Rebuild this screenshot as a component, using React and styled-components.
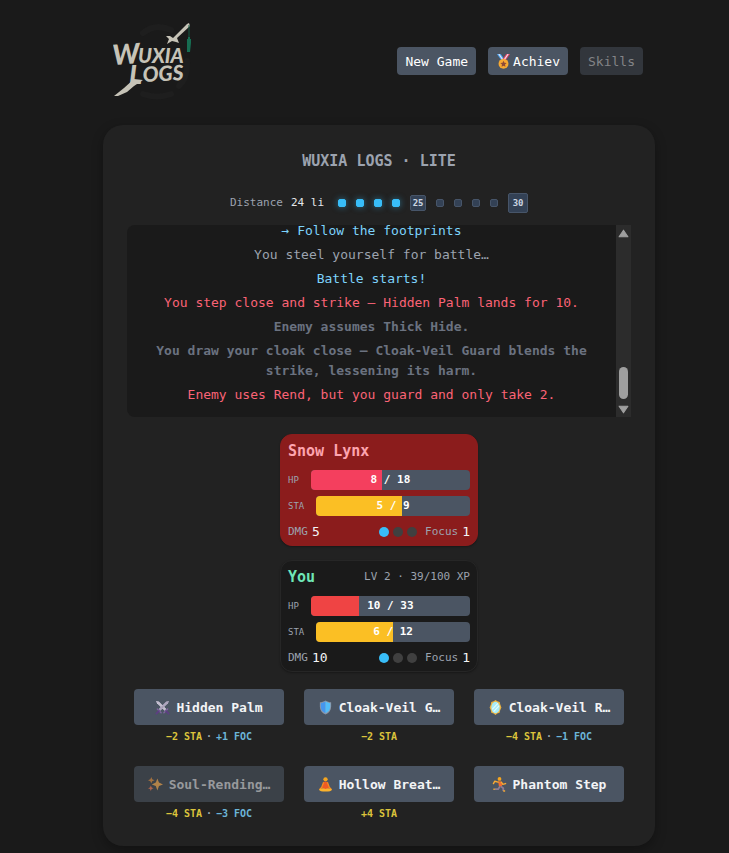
import React from "react";
import styled, { createGlobalStyle } from "styled-components";

const GlobalStyle = createGlobalStyle`
  * {
    box-sizing: border-box;
  }

  body {
    margin: 0;
    background: #1a1a1a;
    color: #e5e7eb;
    font-family: "DejaVu Sans Mono", "Liberation Mono", monospace;
    font-size: 13px;
    line-height: 20px;
  }

  button {
    font-family: inherit;
  }
`;

const logs = [
  { text: "→ Follow the footprints", tone: "event" },
  { text: "You steel yourself for battle…", tone: "plain" },
  { text: "Battle starts!", tone: "event" },
  { text: "You step close and strike — Hidden Palm lands for 10.", tone: "damage" },
  { text: "Enemy assumes Thick Hide.", tone: "dim" },
  {
    text: "You draw your cloak close — Cloak-Veil Guard blends the strike, lessening its harm.",
    tone: "dim",
  },
  { text: "Enemy uses Rend, but you guard and only take 2.", tone: "damage" },
];

const tones = {
  event: "#7dd3fc",
  plain: "#9ca3af",
  damage: "#fb6376",
  dim: "#6b7280",
};

const skills = [
  { name: "Hidden Palm", icon: "swords", sta: "−2 STA", foc: "+1 FOC" },
  { name: "Cloak-Veil Guard", icon: "shield", sta: "−2 STA" },
  { name: "Cloak-Veil Reflection", icon: "mirror", sta: "−4 STA", foc: "−1 FOC" },
  { name: "Soul-Rending Palm", icon: "sparkles", sta: "−4 STA", foc: "−3 FOC", disabled: true },
  { name: "Hollow Breathing", icon: "lotus", sta: "+4 STA" },
  { name: "Phantom Step", icon: "runner" },
];

const steps = [
  { on: true },
  { on: true },
  { on: true },
  { on: true },
  { mark: 25 },
  {},
  {},
  {},
  {},
  { mark: 30, last: true },
];

const icons = {
  swords: (
    <>
      <path d="M1 1l3 .7 8 8-1.7 1.7-8.2-8z" fill="#d9d3e3" />
      <path d="M15 1l-3 .7-8 8 1.7 1.7 8.2-8z" fill="#b9b1c9" />
      <path d="M2 1.5l9 9M14 1.5l-9 9" stroke="#8f869f" strokeWidth=".6" />
      <path d="M2.500 9.500l4 4M13.500 9.500l-4 4" stroke="#8064a0" strokeWidth="1.500" strokeLinecap="round" />
      <path d="M4 12l-2.500 2.500M12 12l2.500 2.500" stroke="#5d3f82" strokeWidth="2" strokeLinecap="round" />
    </>
  ),
  shield: (
    <>
      <path d="M8 .5c2 1.300 4 1.800 6 2v4.800c0 3.800-2.400 6.700-6 8.200-3.600-1.500-6-4.400-6-8.200V2.500c2-.2 4-.7 6-2z" fill="#8d98a9" />
      <path d="M8 1.700v12.500c-3-1.500-5-3.800-5-7V3.400c1.800-.2 3.400-.7 5-1.700z" fill="#4596ee" />
      <path d="M8 1.700v12.500c3-1.500 5-3.800 5-7V3.400c-1.800-.2-3.400-.7-5-1.700z" fill="#52bdf8" />
    </>
  ),
  mirror: (
    <>
      <path d="M8 0l2 1.300 2.500.7.500 2.500L14.300 8 13 11l-.7 2.700-2.500.8L8 16l-2-1.500-2.500-.8L3 11 1.700 8 3 4.700 3.500 2 6 1.300z" fill="#edb544" />
      <ellipse cx="8" cy="8" rx="4.500" ry="6.200" fill="#a6edf9" />
      <path d="M4.500 10l6-6.500M6 12.500l6-6.500" stroke="#e6fcff" strokeWidth="1.200" />
    </>
  ),
  sparkles: (
    <>
      <path d="M10 1.500l1.700 4.300L16 8l-4.300 1.700L10 14.500 8.300 9.700 4 8l4.300-2.200z" fill="#f0a54a" />
      <path d="M3.500 0l1 2.500L7 3.500l-2.500 1-1 2.500-1-2.500L0 3.500l2.500-1z" fill="#d98a3c" />
      <path d="M3 9l.9 2.100L6 12l-2.100.9L3 15l-.9-2.100L0 12l2.100-.9z" fill="#ee7850" />
    </>
  ),
  lotus: (
    <>
      <circle cx="8" cy="2.500" r="2.300" fill="#f5a51f" />
      <path d="M6 5h4l2 6.500-2.500 1.200h-3L4 11.500z" fill="#ee5a24" />
      <path d="M6 5.500L4 11l-2.500 2.500M10 5.500l2 5.500 2.500 2.500" fill="none" stroke="#f58a20" strokeWidth="1.400" strokeLinejoin="round" />
      <path d="M1 13.500q3.500-2.500 7-.8 3.500-1.700 7 .8-1 2-7 2t-7-2z" fill="#fbb22c" />
    </>
  ),
  runner: (
    <>
      <circle cx="8" cy="2" r="2" fill="#f5a51f" />
      <path d="M6.500 4.500l3.500.2.800 5-3.300 1z" fill="#f26b31" />
      <path d="M6.500 5.500L3 4.500 1.500 7M10 5.500l1.500 2.300 3-.8" fill="none" stroke="#f9aa32" strokeWidth="1.500" strokeLinecap="round" strokeLinejoin="round" />
      <path d="M9.500 10l2.500 2v3M8.500 10L6.500 13H3" fill="none" stroke="#8d7c94" strokeWidth="1.900" strokeLinejoin="round" />
      <path d="M3 13H1.500M12 15h2" stroke="#f9aa32" strokeWidth="1.500" />
    </>
  ),
  medal: (
    <>
      <path d="M1 0h4l4.500 6-3 2z" fill="#4aa5f0" />
      <path d="M15 0h-4L6.500 6l3 2z" fill="#e94262" />
      <path d="M3 0l4.500 6.500M13 0L8.500 6.500" stroke="#e7e3f2" strokeWidth="1.200" />
      <circle cx="8" cy="10.500" r="5.300" fill="#f7a932" />
      <path d="M8 7.200l1 2.200 2.400.2-1.800 1.600.5 2.400L8 12.400l-2.100 1.200.5-2.400-1.800-1.600L7 9.400z" fill="#8d4b38" />
    </>
  ),
};

function Emoji({ name }) {
  return (
    <EmojiSvg viewBox="0 0 16 16" aria-hidden="true">
      {icons[name]}
    </EmojiSvg>
  );
}

function Logo() {
  return (
    <LogoSvg viewBox="0 0 84 80" role="img" aria-label="Wuxia Logs">
      <path d="M30 12Q42 2 58 9M74 40Q75 56 66 65M30 73Q44 78 58 73" fill="none" stroke="#1e1e1e" strokeWidth="6" strokeLinecap="round" />
      <g fill="#c6c3b7">
        <path d="M74 3l2-1 1 3-13 12 2 5-3-1-4-1-5 3 2-5-3-3 4 0 3 2z" />
        <path d="M21 58l9 1-9 6-7 6-9 4-4 0 10-8z" />
        <g fontFamily="Lato, 'Open Sans', sans-serif" fontWeight="900" fontStyle="italic">
          <text x="0" y="44" fontSize="28" transform="rotate(-4 0 44)">W</text>
          <text x="25" y="42" fontSize="20">UXIA</text>
          <text x="16" y="63" fontSize="27">L</text>
          <text x="30" y="61" fontSize="21" transform="rotate(-3 30 61)">OGS</text>
        </g>
      </g>
      <path d="M76 4v14" stroke="#155943" />
      <path d="M75 16h2v2h1v4l-1 9h-3v-13h1z" fill="#176d52" />
    </LogoSvg>
  );
}

function Meter({ label, value, max, color }) {
  return (
    <MeterRow>
      <MeterLabel>{label}</MeterLabel>
      <Track role="meter" aria-label={label} aria-valuenow={value} aria-valuemin={0} aria-valuemax={max}>
        <Fill $color={color} style={{ width: `${(value / max) * 100}%` }} />
        <TrackText>
          {value} / {max}
        </TrackText>
      </Track>
    </MeterRow>
  );
}

function Fighter({ name, level, enemy, hp, maxHp, sta, maxSta, dmg, focus }) {
  return (
    <Card $enemy={enemy}>
      <CardHead>
        <Name $enemy={enemy}>{name}</Name>
        {level && <Level>{level}</Level>}
      </CardHead>
      <Meters>
        <Meter label="HP" value={hp} max={maxHp} color={enemy ? "#f43f5e" : "#ef4444"} />
        <Meter label="STA" value={sta} max={maxSta} color="#fbbf24" />
      </Meters>
      <Stats>
        <Stat>
          DMG <b>{dmg}</b>
        </Stat>
        <FocusBox>
          <Dots>
            {[1, 2, 3].map((n) => (
              <Dot key={n} $on={n <= focus} />
            ))}
          </Dots>
          <Stat>
            Focus <b>{focus}</b>
          </Stat>
        </FocusBox>
      </Stats>
    </Card>
  );
}

export default function App() {
  return (
    <Page>
      <GlobalStyle />
      <Header>
        <Logo />
        <Nav>
          <NavButton>New Game</NavButton>
          <NavButton>
            <Emoji name="medal" />
            Achiev
          </NavButton>
          <NavButton disabled>Skills</NavButton>
        </Nav>
      </Header>

      <Panel>
        <Title>WUXIA LOGS · LITE</Title>

        <Distance>
          <DistanceText>
            Distance <b>24 li</b>
          </DistanceText>
          <Steps>
            {steps.map((step, index) =>
              step.mark ? (
                <Mark key={index} $last={step.last}>{step.mark}</Mark>
              ) : (
                <Step key={index} $on={step.on} />
              )
            )}
          </Steps>
        </Distance>

        <LogBox>
          <LogList>
            {logs.map((log) => (
              <LogLine key={log.text} $tone={log.tone}>{log.text}</LogLine>
            ))}
          </LogList>
          <Scrollbar>
            <Arrow viewBox="0 0 10 8" aria-hidden="true">
              <path d="M5 1L9 7H1z" />
            </Arrow>
            <Thumb />
            <Arrow viewBox="0 0 10 8" aria-hidden="true">
              <path d="M5 7L1 1h8z" />
            </Arrow>
          </Scrollbar>
        </LogBox>

        <Fighters>
          <Fighter enemy name="Snow Lynx" hp={8} maxHp={18} sta={5} maxSta={9} dmg={5} focus={1} />
          <Fighter name="You" level="LV 2 · 39/100 XP" hp={10} maxHp={33} sta={6} maxSta={12} dmg={10} focus={1} />
        </Fighters>

        <SkillGrid>
          {skills.map((skill) => (
            <div key={skill.name}>
              <SkillButton disabled={skill.disabled}>
                <Emoji name={skill.icon} />
                <SkillName>
                  {skill.name.length > 12 ? `${skill.name.slice(0, 12).trimEnd()}…` : skill.name}
                </SkillName>
              </SkillButton>
              <Cost>
                {skill.sta && <Sta>{skill.sta}</Sta>}
                {skill.foc && <span>·</span>}
                {skill.foc && <Foc>{skill.foc}</Foc>}
              </Cost>
            </div>
          ))}
        </SkillGrid>
      </Panel>
    </Page>
  );
}

const Page = styled.main`
  padding: 19px 74px 7px 103px;
`;

const Header = styled.header`
  display: flex;
  align-items: center;
  justify-content: space-between;
  height: 84px;
  padding: 0 12px 0 10px;
  margin-bottom: 22px;
`;

const LogoSvg = styled.svg`
  width: 84px;
  height: 80px;
`;

const Nav = styled.nav`
  display: flex;
  gap: 12px;
`;

const NavButton = styled.button`
  display: flex;
  align-items: center;
  gap: 2px;
  height: 28px;
  padding: 0 8px;
  border: 0;
  border-radius: 4px;
  background: #4b5563;
  color: #fff;
  font-size: 13px;

  &:disabled {
    background: #32363c;
    color: #838487;
  }
`;

const EmojiSvg = styled.svg`
  flex: none;
  width: 15px;
  height: 15px;
`;

const Panel = styled.section`
  padding: 24px;
  border-radius: 20px;
  background: #222;
  box-shadow: 0 4px 12px rgba(0, 0, 0, 0.3);
`;

const Title = styled.h1`
  margin: 0 0 20px;
  color: #9ca3af;
  font-size: 15px;
  line-height: 24px;
  text-align: center;
`;

const Distance = styled.div`
  display: flex;
  align-items: center;
  justify-content: center;
  gap: 14px;
  height: 20px;
  margin-bottom: 12px;
`;

const DistanceText = styled.div`
  display: flex;
  gap: 8px;
  color: #9ca3af;
  font-size: 11px;

  b {
    color: #e5e7eb;
    font-weight: normal;
  }
`;

const Steps = styled.div`
  display: flex;
  align-items: center;
  gap: 10px;
`;

const Step = styled.span`
  width: 8px;
  height: 8px;
  border: 1px solid ${({ $on }) => ($on ? "#38bdf8" : "#475569")};
  border-radius: 2px;
  background: ${({ $on }) => ($on ? "#38bdf8" : "#334155")};
  box-shadow: ${({ $on }) => ($on ? "0 0 6px rgba(56, 189, 248, 0.5)" : "none")};
`;

const Mark = styled.span`
  display: flex;
  align-items: center;
  justify-content: center;
  width: ${({ $last }) => ($last ? "20px" : "16px")};
  height: ${({ $last }) => ($last ? "20px" : "16px")};
  border: 1px solid #475569;
  border-radius: 2px;
  background: #334155;
  color: #cbd5e1;
  font-size: 9px;
  font-weight: bold;
`;

const LogBox = styled.div`
  display: flex;
  height: 192px;
  overflow: hidden;
  border-radius: 8px 0 0 8px;
  background: #1a1a1a;
`;

const LogList = styled.div`
  flex: 1;
  display: flex;
  flex-direction: column;
  justify-content: flex-end;
  gap: 4px;
  padding: 0 12px 12px;
`;

const LogLine = styled.p`
  margin: 0;
  color: ${({ $tone }) => tones[$tone]};
  font-weight: ${({ $tone }) => ($tone === "dim" ? "bold" : "normal")};
  text-align: center;
`;

const Scrollbar = styled.div`
  display: flex;
  flex-direction: column;
  align-items: center;
  width: 15px;
  padding: 4px 0 3px;
  background: #2c2c2c;
`;

const Arrow = styled.svg`
  width: 11px;
  height: 9px;
  fill: #9f9f9f;
  stroke: #9f9f9f;
  stroke-width: 1;
  stroke-linejoin: round;
`;

const Thumb = styled.span`
  width: 9px;
  height: 32px;
  margin: auto 0 6px;
  border-radius: 5px;
  background: #9f9f9f;
`;

const Fighters = styled.div`
  display: flex;
  flex-direction: column;
  align-items: center;
  gap: 14px;
  margin: 17px 0;
`;

const Card = styled.article`
  width: 198px;
  padding: 4px 7px 3px;
  border: 1px solid ${({ $enemy }) => ($enemy ? "#8b1c1c" : "#262626")};
  border-radius: 12px;
  background: ${({ $enemy }) => ($enemy ? "#8b1c1c" : "#1a1a1a")};
  box-shadow: 0 1px 2px rgba(0, 0, 0, 0.3);
`;

const CardHead = styled.div`
  display: flex;
  align-items: center;
  justify-content: space-between;
  height: 24px;
  margin-bottom: 7px;
`;

const Name = styled.h2`
  margin: 0;
  color: ${({ $enemy }) => ($enemy ? "#fda4af" : "#6ee7b7")};
  font-size: 15px;
`;

const Level = styled.span`
  color: #9ca3af;
  font-size: 11px;
`;

const Meters = styled.div`
  display: grid;
  gap: 6px;
  margin-bottom: 6px;
`;

const MeterRow = styled.div`
  display: flex;
  align-items: center;
  gap: 12px;
`;

const MeterLabel = styled.span`
  color: #9ca3af;
  font-size: 9px;
`;

const Track = styled.div`
  position: relative;
  flex: 1;
  height: 20px;
  overflow: hidden;
  border-radius: 4px;
  background: #4b5563;
`;

const Fill = styled.div`
  height: 100%;
  background: ${({ $color }) => $color};
`;

const TrackText = styled.span`
  position: absolute;
  inset: 0;
  color: #fff;
  font-size: 11px;
  font-weight: bold;
  text-align: center;
`;

const Stats = styled.div`
  display: flex;
  align-items: center;
  justify-content: space-between;
`;

const FocusBox = styled.div`
  display: flex;
  align-items: center;
  gap: 8px;
`;

const Stat = styled.span`
  display: flex;
  gap: 4px;
  color: #9ca3af;
  font-size: 11px;

  b {
    color: #f3f4f6;
    font-size: 13px;
    font-weight: normal;
  }
`;

const Dots = styled.span`
  display: flex;
  gap: 4px;
`;

const Dot = styled.span`
  width: 10px;
  height: 10px;
  border-radius: 50%;
  background: ${({ $on }) => ($on ? "#38bdf8" : "#404040")};
`;

const SkillGrid = styled.div`
  display: grid;
  grid-template-columns: repeat(3, minmax(0, 1fr));
  gap: 21px 20px;
  padding: 0 7px;
`;

const SkillButton = styled.button`
  display: flex;
  align-items: center;
  justify-content: center;
  gap: 6px;
  width: 100%;
  height: 36px;
  padding: 0 8px;
  border: 0;
  border-radius: 4px;
  background: #4b5563;
  color: #f3f4f6;
  font-size: 13px;
  font-weight: bold;

  &:disabled {
    background: #3b4148;
    color: #97999c;
  }

  &:disabled svg {
    opacity: 0.65;
  }
`;

const SkillName = styled.span`
  white-space: nowrap;
`;

const Cost = styled.div`
  display: flex;
  justify-content: center;
  gap: 4px;
  height: 20px;
  padding-top: 2px;
  color: #9ca3af;
  font-size: 10px;
  font-weight: bold;
`;

const Sta = styled.span`
  color: #dcc43c;
`;

const Foc = styled.span`
  color: #6cb5d8;
`;
